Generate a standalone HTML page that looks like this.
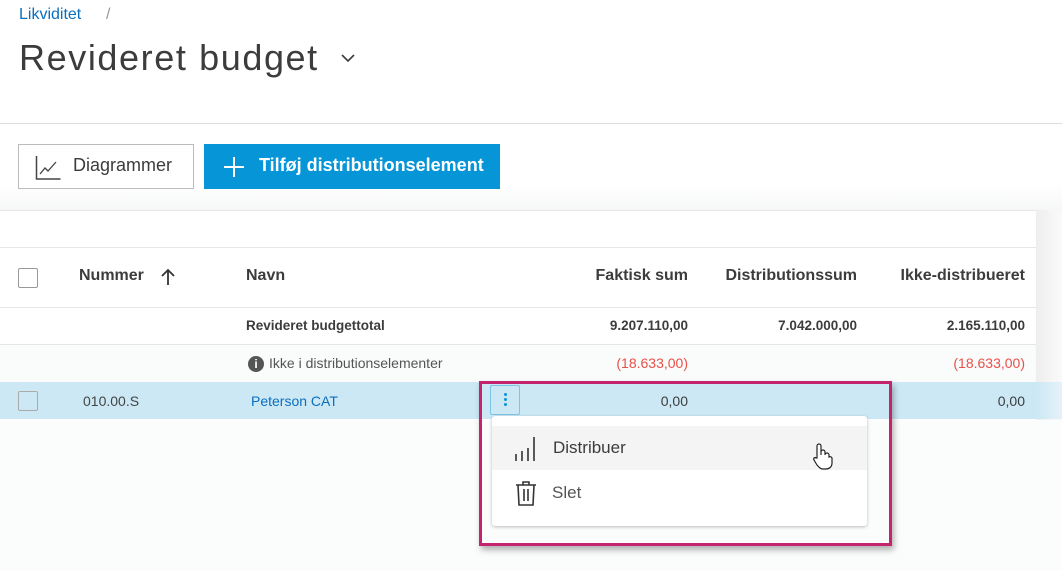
<!DOCTYPE html>
<html><head><style>
*{box-sizing:border-box;margin:0;padding:0}
body{width:1062px;height:570px;overflow:hidden;background:#fff;font-family:"Liberation Sans",sans-serif;color:#3c3c3c;position:relative}
.a{position:absolute}
.r{text-align:right}
.hline{position:absolute;left:0;width:1036px;height:1px;background:#e6e6e6}
.b{font-weight:bold}
</style></head><body>
<div class="a" style="left:19px;top:6px;font-size:16px;color:#0a6fbf">Likviditet</div>
<div class="a" style="left:106px;top:6px;font-size:16px;color:#999">/</div>
<div class="a" style="left:19px;top:37px;font-size:36px;color:#3c3c3c;letter-spacing:1.6px">Revideret budget</div>
<svg class="a" style="left:340px;top:52px" width="16" height="12"><path d="M2 3l6 6 6-6" fill="none" stroke="#3c3c3c" stroke-width="1.6"/></svg>
<div class="a" style="left:0;top:123px;width:1062px;height:1px;background:#ddd"></div>
<div class="a" style="left:0;top:124px;width:1062px;height:86px;background:linear-gradient(#fff,#fff 70%,#f6f7f7)"></div>
<div class="a" style="left:18px;top:144px;width:176px;height:45px;border:1px solid #bbb;background:#fff"></div>
<svg class="a" style="left:35px;top:155px" width="26" height="26"><path d="M1.5 1v23h24" fill="none" stroke="#444" stroke-width="1.5"/><path d="M5 19l5-6 3 3 8-9" fill="none" stroke="#444" stroke-width="1.3"/></svg>
<div class="a" style="left:73px;top:155px;font-size:18px;color:#3c3c3c">Diagrammer</div>
<div class="a" style="left:204px;top:144px;width:296px;height:45px;background:#0696d7"></div>
<svg class="a" style="left:224px;top:157px" width="20" height="20"><path d="M10 0v20M0 10h20" stroke="#fff" stroke-width="2"/></svg>
<div class="a" style="left:259px;top:155px;font-size:18px;color:#fff;font-weight:bold">Tilføj distributionselement</div>
<div class="a" style="left:1036px;top:210px;width:26px;height:210px;background:linear-gradient(90deg,#eee,#fafafa)"></div>
<div class="hline" style="top:210px"></div>
<div class="hline" style="top:247px"></div>
<div class="a" style="left:18px;top:268px;width:20px;height:20px;border:1px solid #999;border-radius:2px;background:#fff"></div>
<div class="a b" style="left:79px;top:267px;font-size:16px">Nummer</div>
<svg class="a" style="left:160px;top:268px" width="16" height="18"><path d="M8 17V2M2 8l6-6 6 6" fill="none" stroke="#333" stroke-width="1.8"/></svg>
<div class="a b" style="left:246px;top:267px;font-size:16px">Navn</div>
<div class="a b r" style="left:520px;width:168px;top:267px;font-size:16px">Faktisk sum</div>
<div class="a b r" style="left:690px;width:167px;top:267px;font-size:16px">Distributionssum</div>
<div class="a b r" style="left:860px;width:165px;top:267px;font-size:16px">Ikke-distribueret</div>
<div class="hline" style="top:307px"></div>
<div class="a b" style="left:246px;top:318px;font-size:13.5px">Revideret budgettotal</div>
<div class="a b r" style="left:520px;width:168px;top:318px;font-size:13.5px">9.207.110,00</div>
<div class="a b r" style="left:690px;width:167px;top:318px;font-size:13.5px">7.042.000,00</div>
<div class="a b r" style="left:860px;width:165px;top:318px;font-size:13.5px">2.165.110,00</div>
<div class="hline" style="top:344px"></div>
<div class="a" style="left:0;top:345px;width:1036px;height:37px;background:#fafbfb"></div>
<div class="a" style="left:248px;top:356px;width:16px;height:16px;border-radius:50%;background:#555;color:#fff;font-size:12px;font-weight:bold;text-align:center;line-height:16px">i</div>
<div class="a" style="left:269px;top:355px;font-size:14px;color:#555">Ikke i distributionselementer</div>
<div class="a r" style="left:520px;width:168px;top:355px;font-size:14px;color:#e8504a">(18.633,00)</div>
<div class="a r" style="left:860px;width:165px;top:355px;font-size:14px;color:#e8504a">(18.633,00)</div>
<div class="a" style="left:0;top:382px;width:1062px;height:37px;background:#cce8f4"></div>
<div class="a" style="left:1036px;top:382px;width:26px;height:37px;background:linear-gradient(90deg,#cce8f4,#e5f2f8)"></div>
<div class="a" style="left:18px;top:391px;width:20px;height:20px;border:1px solid #aaa;border-radius:2px"></div>
<div class="a" style="left:83px;top:393px;font-size:14px;color:#444">010.00.S</div>
<div class="a" style="left:251px;top:393px;font-size:14px;color:#0a6fbf">Peterson CAT</div>
<div class="a" style="left:490px;top:385px;width:30px;height:30px;border:1px solid #7cc4e8;border-radius:2px"></div>
<div class="a" style="left:504px;top:393px;width:3px;height:3px;border-radius:50%;background:#0696d7;box-shadow:0 5px 0 #0696d7,0 10px 0 #0696d7"></div>
<div class="a r" style="left:520px;width:168px;top:393px;font-size:14px">0,00</div>
<div class="a r" style="left:860px;width:165px;top:393px;font-size:14px">0,00</div>
<div class="a" style="left:0;top:420px;width:1062px;height:150px;background:#fbfcfc"></div>
<div class="a" style="left:479px;top:381px;width:413px;height:165px;border:3px solid #c4246e;box-shadow:2px 4px 6px rgba(0,0,0,.3)"></div>
<div class="a" style="left:492px;top:416px;width:375px;height:110px;background:#fff;border-radius:3px;box-shadow:0 1px 3px rgba(0,0,0,.25)"></div>
<div class="a" style="left:492px;top:426px;width:375px;height:44px;background:#f4f4f4"></div>
<svg class="a" style="left:514px;top:436px" width="26" height="26"><path d="M2 25v-7M8 25v-10M14 25v-13M20 25v-24" stroke="#333" stroke-width="1.6"/></svg>
<div class="a" style="left:553px;top:438px;font-size:17px;color:#3c3c3c">Distribuer</div>
<svg class="a" style="left:810px;top:442px" width="24" height="28"><path d="M7 16V4a2 2 0 014 0v9v-3a2 2 0 014 0v3a2 2 0 014 0v2a2 2 0 013 1v5c0 4-3 6-6 6h-3c-3 0-4-2-6-4l-3-5c-1-2 1-3 2-2z" fill="#fff" stroke="#222" stroke-width="1.2"/></svg>
<svg class="a" style="left:514px;top:480px" width="26" height="26"><path d="M2 5h20M9 5V2h6v3M4 5l1 20h14l1-20M10 9v12M14 9v12" fill="none" stroke="#333" stroke-width="1.6"/></svg>
<div class="a" style="left:552px;top:483px;font-size:17px;color:#555">Slet</div>
</body></html>
